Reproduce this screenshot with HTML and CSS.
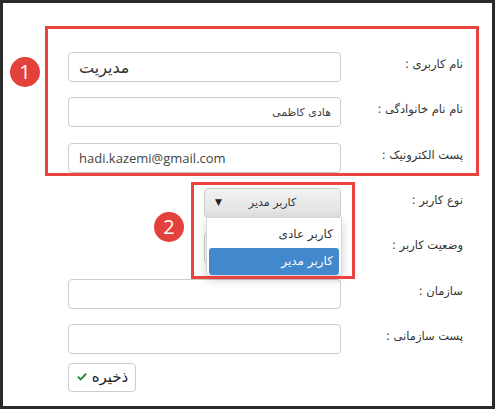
FILE: index.html
```html
<!DOCTYPE html>
<html lang="fa">
<head>
<meta charset="utf-8">
<title>فرم کاربر</title>
<link rel="stylesheet" href="styles.css">
</head>
<body>
<div class="frame">
  <div class="form">
    <div class="label">نام کاربری :</div>
    <div class="ctl ltr big">مدیریت</div>

    <div class="label">نام نام خانوادگی :</div>
    <div class="ctl small">هادی کاظمی</div>

    <div class="label">پست الکترونیک :</div>
    <div class="ctl ltr email">hadi.kazemi@gmail.com</div>

    <div class="label">نوع کاربر :</div>
    <div class="select"><span class="select-text">کاربر مدیر</span><span class="caret">▼</span></div>

    <div class="label">وضعیت کاربر :</div>
    <div class="ctl short"></div>

    <div class="label">سازمان :</div>
    <div class="ctl"></div>

    <div class="label">پست سازمانی :</div>
    <div class="ctl"></div>

    <div class="label"></div>
    <div class="btn-cell">
      <button class="btn" type="button">
        <svg class="check" viewBox="0 0 14 12" width="12" height="10"><path d="M1.2 6.4 L2.9 4.7 L5.4 7.2 L11.1 1.3 L12.8 3 L5.4 10.5 Z" fill="#2f8a36"/></svg>
        <span class="btn-text">ذخیره</span>
      </button>
    </div>
  </div>

  <div class="menu">
    <div class="opt">کاربر عادی</div>
    <div class="opt active">کاربر مدیر</div>
  </div>

  <div class="mark mark1"></div>
  <div class="mark mark2"></div>
  <div class="badge badge1">1</div>
  <div class="badge badge2">2</div>
</div>
</body>
</html>
```

FILE: styles.css
```css
* { box-sizing: border-box; }
html, body { margin: 0; padding: 0; background: #2a2a2a; }
body { font-family: Tahoma, "DejaVu Sans", sans-serif; color: #333; }

.frame {
  position: relative;
  width: 495px;
  height: 409px;
  border: 3px solid #2a2a2a;
  background: #fff;
  overflow: hidden;
}

.form {
  direction: rtl;
  display: grid;
  grid-template-columns: 122px 273px;
  grid-auto-rows: 30px;
  row-gap: 15.33px;
  justify-content: start;
  padding: 49px 29px 0 0;
}

.label {
  font-size: 11.5px;
  line-height: 18px;
  padding-top: 3px;
  color: #333;
  text-align: right;
  white-space: nowrap;
}

.ctl {
  height: 30px;
  border: 1px solid #ccc;
  border-radius: 4px;
  background: #fff;
  color: #444;
  padding: 0 9px 0 10px;
  display: flex;
  align-items: center;
  white-space: nowrap;
}
.ctl.ltr { direction: ltr; }
.ctl.big { font-size: 16px; color: #333; }
.ctl.small { font-size: 11px; }
.ctl.email { font-family: "Open Sans", sans-serif; font-size: 13px; color: #444; }
.ctl.short { width: 137px; }

.select {
  width: 137px;
  height: 30px;
  border: 1px solid #ccc;
  border-radius: 4px;
  background: linear-gradient(#f2f2f2, #e0e0e0);
  display: flex;
  align-items: center;
  justify-content: center;
  position: relative;
  font-size: 11px;
  color: #333;
}
.caret {
  position: absolute;
  left: 10px;
  top: 8px;
  font-size: 9px;
  color: #222;
}

.btn-cell {
  display: flex;
  justify-content: flex-end;
  margin-top: -6px;
}
.btn {
  width: 68px;
  height: 29px;
  border: 1px solid #ccc;
  border-radius: 4px;
  background: #fff;
  font-family: Tahoma, "DejaVu Sans", sans-serif;
  color: #222;
  display: flex;
  align-items: center;
  justify-content: center;
  gap: 4px;
  padding: 0 0 2px 0;
  direction: ltr;
}
.btn-text { font-size: 15px; color: #222; }

.menu {
  position: absolute;
  left: 203px;
  top: 214px;
  width: 136px;
  height: 59px;
  background: #fff;
  border: 1px solid rgba(0,0,0,.15);
  border-radius: 0 0 4px 4px;
  box-shadow: 0 4px 10px rgba(0,0,0,.18);
  padding: 2px;
  direction: rtl;
  font-size: 12px;
}
.opt {
  height: 27px;
  line-height: 27px;
  padding-right: 6px;
  color: #333;
  border-radius: 3px;
}
.opt:first-child { margin-top: 1px; }
.opt.active {
  background: #4288cc;
  color: #fff;
}

.mark {
  position: absolute;
  border: 3px solid #e8433f;
}
.mark1 { left: 42px; top: 23px; width: 434px; height: 150px; }
.mark2 { left: 188px; top: 179px; width: 164px; height: 97px; }

.badge {
  position: absolute;
  width: 30px;
  height: 30px;
  border-radius: 50%;
  background: #e2413c;
  color: #fff;
  font-family: "Open Sans", sans-serif;
  font-size: 20px;
  line-height: 30px;
  text-align: center;
}
.badge1 { left: 7px; top: 54px; }
.badge2 { left: 151px; top: 209px; }
```
